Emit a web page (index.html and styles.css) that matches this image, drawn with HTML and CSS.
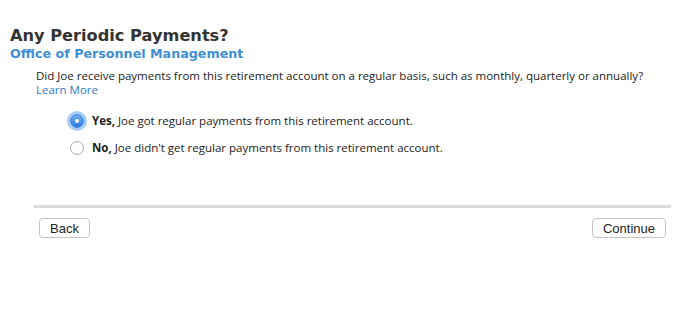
FILE: index.html
```html
<!DOCTYPE html>
<html lang="en">
<head>
    <meta charset="UTF-8">
    <title>Any Periodic Payments?</title>
    <link rel="stylesheet" href="styles.css">
</head>
<body>
    <div class="page">
        <h1 class="title">Any Periodic Payments?</h1>
        <h2 class="subtitle">Office of Personnel Management</h2>

        <div class="question">
            <p>Did Joe receive payments from this retirement account on a regular basis, such as monthly, quarterly or annually?</p>
            <a href="#" class="learn-more">Learn More</a>
        </div>

        <div class="options">
            <label class="option">
                <input type="radio" name="periodic" value="yes" checked>
                <span><b>Yes,</b> Joe got regular payments from this retirement account.</span>
            </label>
            <label class="option">
                <input type="radio" name="periodic" value="no">
                <span><b>No,</b> Joe didn't get regular payments from this retirement account.</span>
            </label>
        </div>

        <div class="divider"></div>

        <div class="actions">
            <button class="nav-button">Back</button>
            <button class="nav-button">Continue</button>
        </div>
    </div>
</body>
</html>
```

FILE: styles.css
```css
body {
    margin: 0;
    background: #fff;
    font-family: "Open Sans", "DejaVu Sans", sans-serif;
    color: #222;
}

.page {
    padding: 26px 0 0 10px;
}

.title {
    margin: 0;
    font-family: "DejaVu Sans", sans-serif;
    font-size: 16.2px;
    line-height: 20px;
    font-weight: bold;
    color: #333;
}

.subtitle {
    margin: 0;
    font-family: "DejaVu Sans", sans-serif;
    font-size: 12.7px;
    line-height: 15px;
    font-weight: bold;
    color: #3f8fd5;
}

.question {
    margin: 8px 0 0 26px;
    font-size: 11.5px;
    line-height: 13.5px;
}

.question p {
    margin: 0;
}

.learn-more {
    color: #2f7cc3;
    text-decoration: none;
}

.options {
    margin: 17px 0 0 60px;
    display: flex;
    flex-direction: column;
    gap: 12px;
}

.option {
    display: flex;
    align-items: center;
    gap: 8px;
    font-size: 11.5px;
    line-height: 15px;
}

.option input {
    appearance: none;
    -webkit-appearance: none;
    margin: 0;
    width: 14px;
    height: 14px;
    border-radius: 50%;
    border: 1px solid #a9a9a9;
    background: #fff;
    position: relative;
}

.option input:checked {
    border-color: #3b83e0;
    background: linear-gradient(#6cb0f7, #2d7ae6);
    box-shadow: 0 0 0 3px #a7cdf6;
}

.option input:checked::after {
    content: "";
    position: absolute;
    left: 4px;
    top: 4px;
    width: 4px;
    height: 4px;
    border-radius: 50%;
    background: #fff;
}

.divider {
    margin: 50px 24px 0 24px;
    height: 3px;
    background: #dcdcdc;
}

.actions {
    display: flex;
    justify-content: space-between;
    margin: 10px 29px 0 29px;
}

.nav-button {
    font-family: "Liberation Sans", Arial, sans-serif;
    font-size: 13px;
    height: 20px;
    padding: 0 10px;
    background: #fff;
    border: 1px solid #c4c4c4;
    border-radius: 4px;
    color: #222;
}
```
